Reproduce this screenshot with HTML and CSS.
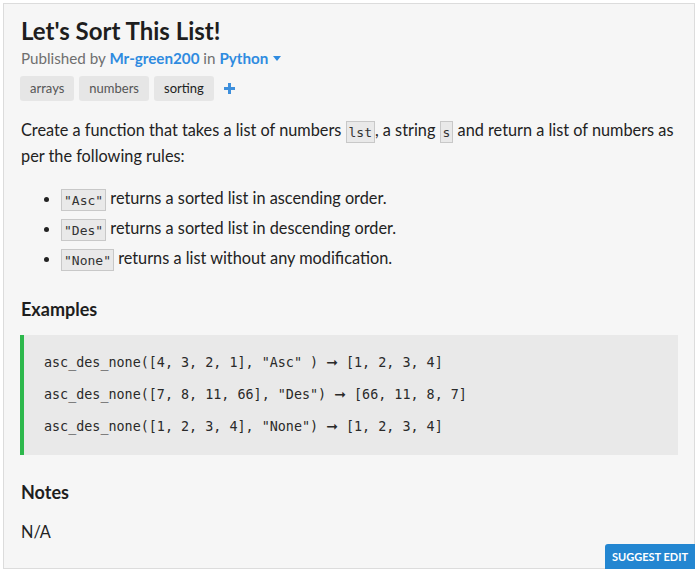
FILE: index.html
```html
<!DOCTYPE html>
<html lang="en">
<head>
<meta charset="utf-8">
<title>Let's Sort This List!</title>
<link rel="stylesheet" href="styles.css">
</head>
<body>
<div class="panel">
  <h1 class="title">Let's Sort This List!</h1>
  <div class="meta">Published by <a class="link">Mr-green200</a> in <a class="link">Python</a> <span class="caret"></span></div>
  <div class="tags">
    <span class="tag">arrays</span>
    <span class="tag">numbers</span>
    <span class="tag tag-active">sorting</span>
    <svg class="plus" width="13" height="13" viewBox="0 0 13 13"><path d="M6.5 1v11M1 6.5h11" stroke="#3d8fdc" stroke-width="3"/></svg>
  </div>
  <p class="desc">Create a function that takes a list of numbers <code>lst</code>, a string <code>s</code> and return a list of numbers as per the following rules:</p>
  <ul class="rules">
    <li><code>"Asc"</code> returns a sorted list in ascending order.</li>
    <li><code>"Des"</code> returns a sorted list in descending order.</li>
    <li><code>"None"</code> returns a list without any modification.</li>
  </ul>
  <h2 class="section">Examples</h2>
  <pre class="examples">asc_des_none([4, 3, 2, 1], "Asc" ) <span class="arrow">➞</span> [1, 2, 3, 4]
asc_des_none([7, 8, 11, 66], "Des") <span class="arrow">➞</span> [66, 11, 8, 7]
asc_des_none([1, 2, 3, 4], "None") <span class="arrow">➞</span> [1, 2, 3, 4]</pre>
  <h2 class="section">Notes</h2>
  <p class="notes">N/A</p>
  <button class="suggest">SUGGEST EDIT</button>
</div>
</body>
</html>
```

FILE: styles.css
```css
html, body {
  margin: 0;
  padding: 0;
  background: #ffffff;
}
body {
  padding: 3px 0 0 3px;
  font-family: Lato, "Open Sans", sans-serif;
  color: #222;
}
.panel {
  position: relative;
  box-sizing: border-box;
  width: 692px;
  height: 566px;
  background: #f6f6f6;
  border: 1px solid #dcdcdc;
  padding: 12px 16px 0 16px;
}
.title {
  margin: 0 0 0 1px;
  font-size: 24px;
  line-height: 30px;
  font-weight: 700;
  color: #1e1e1e;
}
.meta {
  margin: 0 0 0 1px;
  font-size: 15.2px;
  line-height: 24px;
  color: #6f6f6f;
}
.link {
  color: #2f8be0;
  font-weight: 700;
  text-decoration: none;
}
.caret {
  display: inline-block;
  width: 0;
  height: 0;
  border-left: 4.5px solid transparent;
  border-right: 4.5px solid transparent;
  border-top: 5px solid #2f8be0;
  vertical-align: 3px;
  margin-left: 1px;
}
.tags {
  display: flex;
  align-items: center;
  gap: 5px;
  margin-top: 6px;
}
.tag {
  display: inline-block;
  height: 25px;
  line-height: 25px;
  padding: 0 10px;
  background: #e6e6e6;
  border-radius: 3px;
  font-size: 13px;
  color: #555;
}
.tag-active {
  color: #222;
}
.plus {
  margin-left: 4px;
}
.desc {
  margin: 16px 0 0 1px;
  font-size: 16.3px;
  line-height: 26px;
  color: #222;
}
code {
  font-family: "DejaVu Sans Mono", "Liberation Mono", monospace;
  font-size: 13px;
  line-height: 1;
  background: #e9e9e9;
  border: 1px solid #c8c8c8;
  padding: 2.5px 2px;
  color: #333;
}
.rules {
  margin: 16px 0 0 0;
  padding-left: 41px;
  font-size: 16.3px;
  line-height: 26px;
}
.rules li {
  margin-bottom: 4px;
}
.section {
  margin: 26px 0 0 1px;
  font-size: 18px;
  line-height: 24px;
  font-weight: 700;
  color: #1e1e1e;
}
.examples {
  margin: 14px 0 0 0;
  background: #e9e9e9;
  border-left: 4px solid #2db84c;
  padding: 12px 20px;
  font-family: "DejaVu Sans Mono", "Liberation Mono", monospace;
  font-size: 13.4px;
  line-height: 32px;
  color: #2a2a2a;
}
.arrow {
  font-family: "DejaVu Sans", sans-serif;
  font-size: 14px;
  font-weight: 700;
  line-height: 1;
}
.examples + .section {
  margin-top: 25px;
}
.notes {
  margin: 16px 0 0 1px;
  font-size: 16.3px;
  line-height: 24px;
}
.suggest {
  position: absolute;
  right: -1px;
  bottom: -1px;
  width: 90px;
  height: 25px;
  border: none;
  border-radius: 3px 0 0 0;
  background: #2386d1;
  color: #fff;
  font-family: Lato, sans-serif;
  font-weight: 700;
  font-size: 11px;
  padding: 0;
}
```
